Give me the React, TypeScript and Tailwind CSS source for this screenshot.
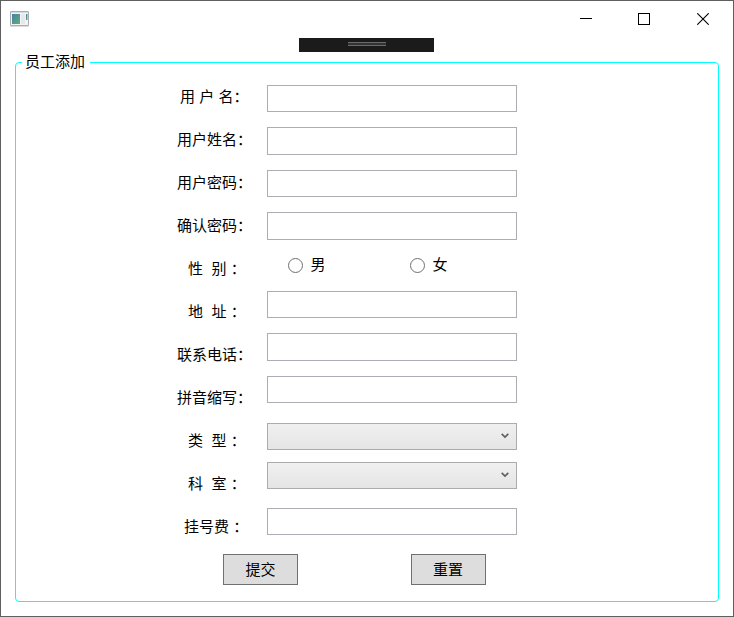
import { useState } from "react";

const labels = [
  { text: "用 户 名：", className: "pl-[164px]" },
  { text: "用户姓名：", className: "pl-[161px]" },
  { text: "用户密码：", className: "pl-[161px]" },
  { text: "确认密码：", className: "pl-[161px]" },
  { text: "性  别 ：", className: "pl-[172px]" },
  { text: "地  址 ：", className: "pl-[172px]" },
  { text: "联系电话：", className: "pl-[161px]" },
  { text: "拼音缩写：", className: "pl-[161px]" },
  { text: "类  型 ：", className: "pl-[172px]" },
  { text: "科  室 ：", className: "pl-[172px]" },
  { text: "挂号费 ：", className: "pl-[168px]" },
];

const TextBox = ({ className, type = "text" }: { className: string; type?: string }) => (
  <input
    type={type}
    className={`block w-[250px] border border-[#abadb3] bg-white px-1 outline-none ${className}`}
  />
);

const ComboBox = ({ className }: { className: string }) => (
  <button
    type="button"
    className={`flex h-[27px] w-[250px] items-start justify-end border border-[#acacac] bg-linear-to-b from-[#f0f0f0] to-[#e5e5e5] pt-[9px] pr-[7px] ${className}`}
  >
    <svg width="8" height="6" viewBox="0 0 8 6" fill="none">
      <path d="M0.7 0.9L4 4.1L7.3 0.9" stroke="#606060" strokeWidth="1.7" />
    </svg>
  </button>
);

interface RadioProps {
  label: string;
  checked: boolean;
  onSelect: () => void;
}

const Radio = ({ label, checked, onSelect }: RadioProps) => (
  <button type="button" className="flex h-5 w-[122px] items-start" onClick={onSelect}>
    <span className="mt-[3px] flex size-[15px] items-center justify-center rounded-full border border-[#707070] bg-white">
      {checked && <span className="size-[7px] rounded-full bg-[#212121]" />}
    </span>
    <span className="-mt-px ml-[7.5px] leading-5">{label}</span>
  </button>
);

const TitleBar = () => (
  <div className="flex h-[37px] shrink-0 items-start justify-between">
    <svg className="mt-[10px] ml-[9px]" width="19" height="16" viewBox="0 0 19 16">
      <defs>
        <linearGradient id="pane" x1="0" y1="0" x2="1" y2="1">
          <stop offset="0" stopColor="#4a7fa8" />
          <stop offset="1" stopColor="#5fae78" />
        </linearGradient>
      </defs>
      <rect x="0.5" y="0.5" width="18" height="14" rx="0.5" fill="#f2f3f4" stroke="#a9aeb3" />
      <rect x="1" y="1" width="17" height="1" fill="#d5d9dc" />
      <rect x="2" y="3" width="8" height="10" fill="url(#pane)" />
      <rect x="11" y="3" width="4" height="10" fill="#e6e8ea" />
      <rect x="16" y="3" width="1.5" height="6" fill="url(#pane)" />
      <rect x="0" y="15" width="19" height="1" fill="#dddddd" />
    </svg>
    <div className="mt-3 mr-6 flex gap-[46px]">
      <svg width="12" height="12" viewBox="0 0 12 12" shapeRendering="crispEdges">
        <rect y="5" width="12" height="1" fill="#000" />
      </svg>
      <svg width="12" height="12" viewBox="0 0 12 12" shapeRendering="crispEdges">
        <rect x="0.5" y="0.5" width="11" height="11" fill="none" stroke="#000" />
      </svg>
      <svg className="ml-px" width="12" height="12" viewBox="0 0 12 12">
        <path d="M0.3 0.3L11.7 11.7M11.7 0.3L0.3 11.7" stroke="#000" strokeWidth="1.1" />
      </svg>
    </div>
  </div>
);

const App = () => {
  const [gender, setGender] = useState("");

  return (
    <div
      lang="zh-CN"
      className="flex h-[617px] w-[734px] flex-col border border-[#5f5f5f] bg-white font-['Noto_Sans_CJK_SC',sans-serif] text-[15px] text-black"
    >
      <TitleBar />

      {/* Debug toolbar */}
      <div className="ml-[298px] flex h-[14px] w-[135px] shrink-0 justify-center bg-[#1b1b1c] pt-1">
        <div className="h-1 w-[38px] border-y border-[#6a6a6a] bg-[#333334]" />
      </div>

      <fieldset className="mx-[14px] h-[550px] rounded-[4px] border border-solid border-[#00ffff]">
        <legend className="ml-[6px] h-[20px] w-[68px] pl-[3px] leading-[18px]">员工添加</legend>

        <div className="flex">
          <div className="w-[251px] pt-[2px] whitespace-pre [word-spacing:0.9px]">
            {labels.map((label) => (
              <div key={label.text} className={`h-[43px] leading-[43px] ${label.className}`}>
                {label.text}
              </div>
            ))}
          </div>

          <div className="pt-[13px]">
            <TextBox className="h-[27px]" />
            <TextBox className="mt-[15px] h-[28px]" />
            <TextBox className="mt-[15px] h-[27px]" type="password" />
            <TextBox className="mt-[15px] h-[28px]" type="password" />
            <div className="mt-[15px] flex pl-[21px]">
              <Radio label="男" checked={gender === "男"} onSelect={() => setGender("男")} />
              <Radio label="女" checked={gender === "女"} onSelect={() => setGender("女")} />
            </div>
            <TextBox className="mt-[16px] h-[27px]" />
            <TextBox className="mt-[15px] h-[28px]" />
            <TextBox className="mt-[15px] h-[27px]" />
            <ComboBox className="mt-[20px]" />
            <ComboBox className="mt-[12px]" />
            <TextBox className="mt-[19px] h-[27px]" />
          </div>
        </div>

        <div className="mt-[7px] flex gap-[113px] pl-[207px]">
          <button type="button" className="h-[31px] w-[75px] border border-[#707070] bg-[#dddddd]">
            提交
          </button>
          <button type="button" className="h-[31px] w-[75px] border border-[#707070] bg-[#dddddd] pr-px">
            重置
          </button>
        </div>
      </fieldset>
    </div>
  );
};

export default App;
